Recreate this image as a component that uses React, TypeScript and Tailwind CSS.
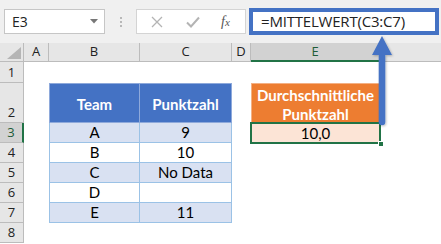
import React from "react";

const colLetters = ["A", "B", "C", "D", "E", ""];

const tableRows = [
  { team: "A", pts: "9", fill: "bg-[#d9e1f2]" },
  { team: "B", pts: "10", fill: "bg-white" },
  { team: "C", pts: "No Data", fill: "bg-[#d9e1f2]" },
  { team: "D", pts: "", fill: "bg-white" },
  { team: "E", pts: "11", fill: "bg-[#d9e1f2]" },
];

function Toolbar() {
  return (
    <div className="h-[43px] bg-[#f0f0f0] flex items-start pl-[4px] pt-[8px]">
      <div className="mt-[1px] w-[101px] h-[25px] bg-white border border-[#c6c6c6] flex items-center justify-between pl-[7px] pr-[6px]">
        <span className="text-[14px] text-[#222] font-['Open_Sans',sans-serif] leading-none">E3</span>
        <svg width="8" height="5" viewBox="0 0 8 5">
          <path d="M0 0 H8 L4 4.5 Z" fill="#777" />
        </svg>
      </div>
      <div className="w-[31px] h-[26px] flex flex-col items-center justify-center gap-[2px] pt-[2px]">
        <div className="w-[2px] h-[2px] bg-[#b8b8b8]" />
        <div className="w-[2px] h-[2px] bg-[#b8b8b8]" />
        <div className="w-[2px] h-[2px] bg-[#b8b8b8]" />
      </div>
      <div className="mt-[1px] w-[110px] h-[25px] bg-white border border-[#d4d4d4] flex items-center">
        <svg width="12" height="12" viewBox="0 0 12 12" className="ml-[14px]">
          <path d="M1 1 L11 11 M11 1 L1 11" stroke="#b4b4b4" strokeWidth="1.3" />
        </svg>
        <svg width="14" height="12" viewBox="0 0 14 12" className="ml-[23px]">
          <path d="M1 6.5 L5 10.5 L13 1.5" stroke="#b4b4b4" strokeWidth="2" fill="none" />
        </svg>
        <span className="ml-[21px] text-[14px] italic text-[#555] font-['Liberation_Serif',serif] leading-none">
          f<span className="text-[11px]">x</span>
        </span>
      </div>
      <div className="ml-[3px] w-[190px] h-[27px] bg-white border-[4px] border-[#4472c4] flex items-center pl-[8px]">
        <span className="text-[15px] text-[#222] font-['Open_Sans',sans-serif] leading-none tracking-[-0.2px]">
          =MITTELWERT(C3:C7)
        </span>
      </div>
    </div>
  );
}

function RowHeader({ n, selected }: { n: number; selected?: boolean }) {
  return selected ? (
    <div className="bg-[#d2d2d2] border-b border-[#bcbcbc] border-r-2 border-r-[#217346] flex items-end justify-center pb-[1px] text-[13px] text-[#1e5c38] font-['Open_Sans',sans-serif] leading-[18px]">
      {n}
    </div>
  ) : (
    <div className="bg-[#e6e6e6] border-b border-r border-[#bcbcbc] flex items-end justify-center pb-[1px] text-[13px] text-[#222] font-['Open_Sans',sans-serif] leading-[18px]">
      {n}
    </div>
  );
}

function Sheet() {
  return (
    <div className="grid grid-cols-[24px_25px_91px_92px_19px_129px_61px] grid-rows-[19px_21px_40px_20px_20px_20px_20px_20px_20px]">
      {/* header row */}
      <div className="bg-[#e6e6e6] border-r border-b border-[#bcbcbc] flex items-end justify-end pr-[2px] pb-[2px]">
        <svg width="14" height="12" viewBox="0 0 14 12">
          <path d="M14 0 V12 H0 Z" fill="#b5b5b5" />
        </svg>
      </div>
      {colLetters.map((l, i) =>
        l === "E" ? (
          <div
            key={i}
            className="bg-[#d2d2d2] border-r border-[#bcbcbc] border-b-2 border-b-[#217346] flex items-center justify-center text-[13px] text-[#1e5c38] font-['Open_Sans',sans-serif]"
          >
            {l}
          </div>
        ) : (
          <div
            key={i}
            className={`bg-[#e6e6e6] border-b border-[#bcbcbc] ${i < 5 ? "border-r" : ""} flex items-center justify-center text-[13px] text-[#222] font-['Open_Sans',sans-serif]`}
          >
            {l}
          </div>
        )
      )}

      {/* row 1 */}
      <RowHeader n={1} />
      <div className="col-span-6 bg-white" />

      {/* row 2 */}
      <RowHeader n={2} />
      <div className="bg-white" />
      <div className="bg-[#4472c4] border border-[#8ea9db] flex items-center justify-center pt-[3px] text-white font-bold text-[15px] font-['Lato',sans-serif]">
        Team
      </div>
      <div className="bg-[#4472c4] border-t border-r border-b border-[#8ea9db] flex items-center justify-center pt-[3px] text-white font-bold text-[15px] font-['Lato',sans-serif]">
        Punktzahl
      </div>
      <div className="bg-white" />
      <div className="bg-[#ed7d31] border border-[#f4b084] flex flex-col items-center justify-center text-white font-bold text-[15px] leading-[19px] font-['Lato',sans-serif] pt-[4px]">
        <span>Durchschnittliche</span>
        <span>Punktzahl</span>
      </div>
      <div className="bg-white" />

      {/* rows 3-7 */}
      {tableRows.map((r, i) => (
        <React.Fragment key={i}>
          <RowHeader n={i + 3} selected={i === 0} />
          <div className="bg-white" />
          <div
            className={`${r.fill} border-l border-r border-b border-[#9bc2e6] flex items-center justify-center text-[15px] text-black font-['Lato',sans-serif]`}
          >
            {r.team}
          </div>
          <div
            className={`${r.fill} border-r border-b border-[#9bc2e6] flex items-center justify-center text-[15px] text-black font-['Lato',sans-serif]`}
          >
            {r.pts}
          </div>
          <div className="bg-white" />
          {i === 0 ? (
            <div className="relative bg-[#fce4d6] flex items-center justify-center text-[15px] text-black font-['Lato',sans-serif]">
              10,0
              <div className="absolute -left-[1px] -top-[1px] -right-[1px] -bottom-[1px] border-2 border-[#217346]" />
              <div className="absolute -right-[4px] -bottom-[4px] w-[6px] h-[6px] bg-[#217346] border border-white" />
            </div>
          ) : (
            <div className="bg-white" />
          )}
          <div className="bg-white" />
        </React.Fragment>
      ))}

      {/* row 8 */}
      <RowHeader n={8} />
      <div className="col-span-6 bg-white" />
    </div>
  );
}

export default function App() {
  return (
    <div className="w-[441px] h-[244px] bg-white relative overflow-hidden">
      <Toolbar />
      <Sheet />
      {/* arrow overlay */}
      <svg className="absolute left-0 top-0 pointer-events-none" width="441" height="244" viewBox="0 0 441 244">
        <defs>
          <filter id="sh" x="-50%" y="-10%" width="200%" height="130%">
            <feDropShadow dx="1" dy="1" stdDeviation="1" floodColor="#000" floodOpacity="0.25" />
          </filter>
        </defs>
        <g filter="url(#sh)">
          <path d="M382 36 L392 55 L385.3 55 L385.3 122 A3.3 3.3 0 0 1 378.7 122 L378.7 55 L372 55 Z" fill="#4472c4" />
        </g>
      </svg>
    </div>
  );
}
